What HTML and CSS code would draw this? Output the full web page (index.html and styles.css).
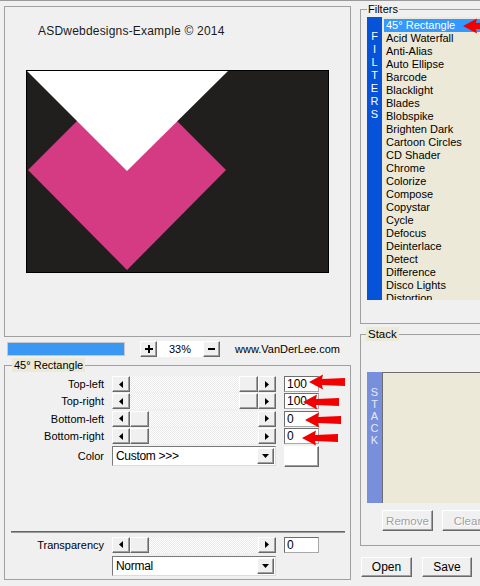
FILE: index.html
```html
<!DOCTYPE html>
<html>
<head>
<meta charset="utf-8">
<link rel="stylesheet" href="styles.css">
</head>
<body>
<div class="app">
  <div class="left">
    <div class="preview">
      <div class="ptitle">ASDwebdesigns-Example © 2014</div>
      <svg class="pimg" width="303" height="203" viewBox="0 0 303 203">
        <rect x="0.5" y="0.5" width="302" height="202" fill="#211e1e" stroke="#000"/>
        <polygon points="2,100 101,1 200,100 101,200" fill="#d53b82"/>
        <polygon points="1,1 202,1 101,101" fill="#fff"/>
      </svg>
    </div>
    <div class="zoomrow">
      <div class="zbar"></div>
      <div class="btn sq first"><svg width="8" height="8" viewBox="0 0 8 8"><rect x="3" y="0" width="2" height="8"/><rect x="0" y="3" width="8" height="2"/></svg></div>
      <div class="zval">33%</div>
      <div class="btn sq"><svg width="7" height="2" viewBox="0 0 7 2"><rect x="0" y="0" width="7" height="2"/></svg></div>
      <div class="site">www.VanDerLee.com</div>
    </div>
    <div class="group params">
      <div class="legend beige">45° Rectangle</div>
      <div class="pgrid">
        <div class="lbl">Top-left</div>
        <div class="scroll end">
          <div class="btn sb"><svg width="4" height="7" viewBox="0 0 4 7"><polygon points="4,0 0,3.5 4,7"/></svg></div>
          <div class="track"><div class="btn thumb"></div></div>
          <div class="btn sb"><svg width="4" height="7" viewBox="0 0 4 7"><polygon points="0,0 4,3.5 0,7"/></svg></div>
        </div>
        <div class="valcell"><div class="val">100</div><svg class="arrow a1" width="36" height="16" viewBox="0 0 36 16"><polygon points="0,8 14,0.5 13,5 36,4 36,12 13,11 14,15.5"/></svg></div>

        <div class="lbl">Top-right</div>
        <div class="scroll end">
          <div class="btn sb"><svg width="4" height="7" viewBox="0 0 4 7"><polygon points="4,0 0,3.5 4,7"/></svg></div>
          <div class="track"><div class="btn thumb"></div></div>
          <div class="btn sb"><svg width="4" height="7" viewBox="0 0 4 7"><polygon points="0,0 4,3.5 0,7"/></svg></div>
        </div>
        <div class="valcell"><div class="val">100</div><svg class="arrow a2" width="36" height="16" viewBox="0 0 36 16"><polygon points="0,8 14,0.5 13,5 36,4 36,12 13,11 14,15.5"/></svg></div>

        <div class="lbl">Bottom-left</div>
        <div class="scroll">
          <div class="btn sb"><svg width="4" height="7" viewBox="0 0 4 7"><polygon points="4,0 0,3.5 4,7"/></svg></div>
          <div class="track"><div class="btn thumb"></div></div>
          <div class="btn sb"><svg width="4" height="7" viewBox="0 0 4 7"><polygon points="0,0 4,3.5 0,7"/></svg></div>
        </div>
        <div class="valcell"><div class="val">0</div><svg class="arrow a3" width="36" height="16" viewBox="0 0 36 16"><polygon points="0,8 14,0.5 13,5 36,4 36,12 13,11 14,15.5"/></svg></div>

        <div class="lbl">Bottom-right</div>
        <div class="scroll">
          <div class="btn sb"><svg width="4" height="7" viewBox="0 0 4 7"><polygon points="4,0 0,3.5 4,7"/></svg></div>
          <div class="track"><div class="btn thumb"></div></div>
          <div class="btn sb"><svg width="4" height="7" viewBox="0 0 4 7"><polygon points="0,0 4,3.5 0,7"/></svg></div>
        </div>
        <div class="valcell"><div class="val">0</div><svg class="arrow a4" width="36" height="16" viewBox="0 0 36 16"><polygon points="0,8 14,0.5 13,5 36,4 36,12 13,11 14,15.5"/></svg></div>

        <div class="lbl">Color</div>
        <div class="combo"><span class="ctext">Custom &gt;&gt;&gt;</span><div class="btn cbtn"><svg width="7" height="4" viewBox="0 0 7 4"><polygon points="0,0 7,0 3.5,4"/></svg></div></div>
        <div class="btn swatch"></div>
      </div>
      <div class="sep"></div>
      <div class="bgrid">
        <div class="lbl">Transparency</div>
        <div class="scroll">
          <div class="btn sb"><svg width="4" height="7" viewBox="0 0 4 7"><polygon points="4,0 0,3.5 4,7"/></svg></div>
          <div class="track"><div class="btn thumb"></div></div>
          <div class="btn sb"><svg width="4" height="7" viewBox="0 0 4 7"><polygon points="0,0 4,3.5 0,7"/></svg></div>
        </div>
        <div class="valcell"><div class="val">0</div></div>
        <div></div>
        <div class="combo"><span class="ctext">Normal</span><div class="btn cbtn"><svg width="7" height="4" viewBox="0 0 7 4"><polygon points="0,0 7,0 3.5,4"/></svg></div></div>
        <div></div>
      </div>
    </div>
  </div>

  <div class="right">
    <div class="group filters">
      <div class="legend">Filters</div>
      <div class="listwrap">
        <div class="vbar"><span>F</span><span>I</span><span>L</span><span>T</span><span>E</span><span>R</span><span>S</span></div>
        <div class="list">
          <div class="item sel">45° Rectangle<svg class="arrow af" width="36" height="16" viewBox="0 0 36 16"><polygon points="0,8 14,0.5 13,5 36,4 36,12 13,11 14,15.5"/></svg></div>
          <div class="item">Acid Waterfall</div>
          <div class="item">Anti-Alias</div>
          <div class="item">Auto Ellipse</div>
          <div class="item">Barcode</div>
          <div class="item">Blacklight</div>
          <div class="item">Blades</div>
          <div class="item">Blobspike</div>
          <div class="item">Brighten Dark</div>
          <div class="item">Cartoon Circles</div>
          <div class="item">CD Shader</div>
          <div class="item">Chrome</div>
          <div class="item">Colorize</div>
          <div class="item">Compose</div>
          <div class="item">Copystar</div>
          <div class="item">Cycle</div>
          <div class="item">Defocus</div>
          <div class="item">Deinterlace</div>
          <div class="item">Detect</div>
          <div class="item">Difference</div>
          <div class="item">Disco Lights</div>
          <div class="item">Distortion</div>
        </div>
      </div>
    </div>
    <div class="group stack">
      <div class="legend beige">Stack</div>
      <div class="stackwrap">
        <div class="sbar"><span>S</span><span>T</span><span>A</span><span>C</span><span>K</span></div>
        <div class="slist"></div>
      </div>
      <div class="sbtns">
        <div class="btn wide dis">Remove</div>
        <div class="btn wide dis">Clear</div>
      </div>
    </div>
    <div class="actions">
      <div class="btn big">Open</div>
      <div class="btn big save">Save</div>
    </div>
  </div>
</div>
</body>
</html>
```

FILE: styles.css
```css
html, body {
  margin: 0;
  padding: 0;
}
body {
  width: 480px;
  height: 586px;
  overflow: hidden;
  background: #f0f0f0;
  border-top: 1px solid #9a9a9a;
  box-sizing: border-box;
  font-family: "Liberation Sans", Arial, sans-serif;
  font-size: 11px;
  color: #000;
}
.app {
  display: flex;
  align-items: flex-start;
}
.left {
  width: 347px;
  margin-left: 4px;
  flex: none;
  display: flex;
  flex-direction: column;
}
.right {
  width: 130px;
  margin-left: 9px;
  flex: none;
  display: flex;
  flex-direction: column;
}

/* generic 3D button */
.btn {
  box-sizing: border-box;
  background: #f0f0f0;
  border: 1px solid;
  border-color: #ffffff #696969 #696969 #ffffff;
  box-shadow: inset -1px -1px 0 #a0a0a0;
  display: flex;
  align-items: center;
  justify-content: center;
}
.btn svg { display: block; fill: #000; }

/* preview */
.preview {
  margin-top: 5px;
  height: 331px;
  box-sizing: border-box;
  border: 1px solid #a0a0a0;
  padding-top: 17px;
  display: flex;
  flex-direction: column;
}
.ptitle {
  margin-left: 33px;
  font-size: 12px;
  line-height: 14px;
  letter-spacing: 0.2px;
  color: #1a1a1a;
}
.pimg {
  display: block;
  margin-left: 21px;
  margin-top: 32px;
}

/* zoom row */
.zoomrow {
  display: flex;
  align-items: center;
  height: 16px;
  margin-top: 4px;
}
.zbar {
  width: 118px;
  height: 14px;
  margin-left: 3px;
  box-sizing: border-box;
  background: #3a98f4;
  border: 1px solid #c8c8c8;
}
.sq {
  width: 17px;
  height: 16px;
}
.sq.first { margin-left: 15px; }
.zval {
  width: 46px;
  height: 16px;
  background: #fff;
  text-align: center;
  line-height: 16px;
  font-size: 11px;
}
.site {
  margin-left: 15px;
  font-size: 11px;
}

/* group boxes */
.group {
  border: 1px solid #a0a0a0;
  box-sizing: border-box;
  display: flex;
  flex-direction: column;
}
.legend {
  align-self: flex-start;
  margin-top: -8px;
  line-height: 14px;
  height: 14px;
  padding: 0 2px;
  background: #f0f0f0;
}
.legend.beige { background: #ece9d8; }

.params {
  margin-top: 8px;
  padding-bottom: 3px;
}
.params .legend { margin-left: 7px; }

.pgrid {
  margin-top: 4px;
  display: grid;
  grid-template-columns: 99px 164px 35px;
  grid-template-rows: 16px 16px 16px 16px 21px;
  column-gap: 8px;
  row-gap: 1.4px;
}
.bgrid {
  margin-top: 4px;
  display: grid;
  grid-template-columns: 99px 164px 35px;
  grid-template-rows: 16px 20px;
  column-gap: 8px;
  row-gap: 3px;
}
.lbl {
  text-align: right;
  align-self: center;
  line-height: 14px;
  white-space: nowrap;
}

.scroll {
  display: flex;
  height: 16px;
}
.sb {
  width: 18px;
  height: 16px;
  flex: none;
}
.track {
  flex: 1;
  display: flex;
  background: repeating-conic-gradient(#ffffff 0 25%, #e9e9e9 0 50%) 0 0 / 2px 2px;
}
.scroll.end .track { justify-content: flex-end; }
.thumb {
  width: 19px;
  height: 16px;
}

.valcell {
  position: relative;
}
.val {
  width: 35px;
  height: 16px;
  box-sizing: border-box;
  background: #fff;
  border: 1px solid;
  border-color: #6e6e6e #a8a8a8 #a8a8a8 #6e6e6e;
  padding-left: 2px;
  line-height: 14px;
  font-size: 12px;
}

.arrow {
  position: absolute;
  fill: #f20000;
}
.a1 { left: 25px; top: -2px; }
.a2 { left: 19px; top: 1px; }
.a3 { left: 21px; top: 1px; }
.a4 { left: 18px; top: 2px; }
.af { left: 79px; top: -1px; }

.combo {
  align-self: center;
  width: 164px;
  height: 20px;
  box-sizing: border-box;
  background: #fff;
  border: 1px solid;
  border-color: #7a7a7a #dcdcdc #dcdcdc #7a7a7a;
  display: flex;
  align-items: center;
}
.ctext {
  flex: 1;
  padding-left: 3px;
  font-size: 12px;
  letter-spacing: -0.3px;
}
.cbtn {
  width: 17px;
  height: 16px;
  margin-right: 1px;
}
.swatch {
  width: 35px;
  height: 21px;
  background: #fff;
}

.sep {
  margin: 64px 5px 0 6px;
  height: 1px;
  border-top: 1px solid #666;
  background: #9a9a9a;
}

/* filters */
.filters {
  margin-top: 8px;
  padding-bottom: 23px;
}
.filters .legend {
  margin-left: 6px;
  padding: 0 1px;
}
.listwrap {
  margin-left: 6px;
  margin-top: 1px;
  height: 283px;
  display: flex;
}
.vbar {
  width: 15px;
  flex: none;
  background: #0652d9;
  color: #fff;
  display: flex;
  flex-direction: column;
  align-items: center;
  padding-top: 13px;
  box-sizing: border-box;
  line-height: 13px;
  font-size: 11px;
}
.list {
  flex: 1;
  background: #ece9d8;
  padding: 2px 0 0 2px;
  overflow: hidden;
}
.item {
  height: 13px;
  line-height: 13px;
  padding-left: 2px;
  white-space: nowrap;
  font-size: 11px;
}
.item.sel {
  position: relative;
  background: #3399ff;
  color: #fff;
}

/* stack */
.stack {
  margin-top: 10px;
  padding-bottom: 14px;
}
.stack .legend {
  margin-left: 5px;
  padding: 0 2px;
  font-size: 11.5px;
}
.stackwrap {
  margin-left: 6px;
  margin-top: 31px;
  height: 131px;
  display: flex;
}
.sbar {
  width: 15px;
  flex: none;
  background: #7890dc;
  color: #e4e9fb;
  display: flex;
  flex-direction: column;
  align-items: center;
  padding-top: 14px;
  box-sizing: border-box;
  line-height: 12px;
  font-size: 11px;
}
.slist {
  flex: 1;
  background: #ece9d8;
  border-top: 1px solid #6d6d6d;
  border-left: 1px solid #6d6d6d;
}
.sbtns {
  margin-top: 7px;
  margin-left: 21px;
  display: flex;
  gap: 9px;
}
.wide {
  width: 51px;
  height: 21px;
  flex: none;
  font-size: 11.5px;
}
.dis {
  color: #a0a0a0;
  text-shadow: 1px 1px 0 #fff;
}

.actions {
  margin-top: 11px;
  margin-left: 1px;
  display: flex;
  gap: 10px;
}
.big {
  width: 51px;
  height: 20px;
  font-size: 12px;
}
.big.save { width: 50px; }
```
